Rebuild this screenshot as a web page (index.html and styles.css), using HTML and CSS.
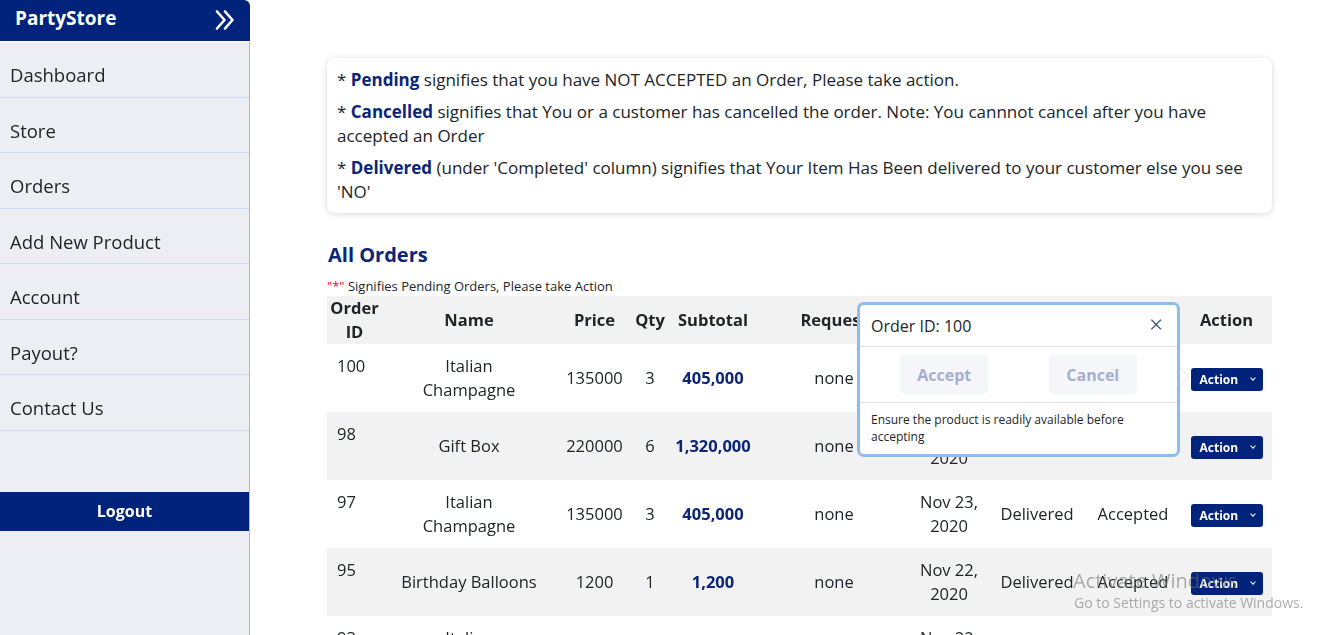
FILE: index.html
```html
<!DOCTYPE html>
<html lang="en">
<head>
<meta charset="utf-8">
<title>PartyStore - Orders</title>
<link rel="stylesheet" href="styles.css">
</head>
<body>
<aside class="sidebar">
  <div class="brand">
    <span class="brand-name">PartyStore</span>
    <svg class="brand-icon" width="22" height="22" viewBox="0 0 22 22" fill="none" stroke="#fff" stroke-width="2.6" stroke-linecap="round" stroke-linejoin="round">
      <polyline points="3,2.5 10.5,11 3,19.5"/>
      <polyline points="11,2.5 18.5,11 11,19.5"/>
    </svg>
  </div>
  <nav class="nav">
    <a href="#">Dashboard</a>
    <a href="#">Store</a>
    <a href="#">Orders</a>
    <a href="#">Add New Product</a>
    <a href="#">Account</a>
    <a href="#">Payout?</a>
    <a href="#">Contact Us</a>
  </nav>
  <button class="logout">Logout</button>
</aside>

<main class="main">
  <section class="info">
    <p>* <b>Pending</b> signifies that you have NOT ACCEPTED an Order, Please take action.</p>
    <p>* <b>Cancelled</b> signifies that You or a customer has cancelled the order. Note: You cannnot cancel after you have accepted an Order</p>
    <p>* <b>Delivered</b> (under 'Completed' column) signifies that Your Item Has Been delivered to your customer else you see 'NO'</p>
  </section>

  <h2 class="title">All Orders</h2>
  <p class="note"><span class="red">"*"</span> Signifies Pending Orders, Please take Action</p>

  <div class="table-wrap">
    <table class="orders">
      <colgroup>
        <col class="c-id"><col class="c-name"><col class="c-price"><col class="c-qty"><col class="c-sub">
        <col class="c-req"><col class="c-date"><col class="c-comp"><col class="c-status"><col class="c-act">
      </colgroup>
      <thead>
        <tr>
          <th>Order ID</th><th>Name</th><th>Price</th><th>Qty</th><th>Subtotal</th>
          <th>Request</th><th>Order Date</th><th>Completed</th><th>Status</th><th>Action</th>
        </tr>
      </thead>
      <tbody>
        <tr>
          <td class="id">100</td><td class="name">Italian Champagne</td><td>135000</td><td>3</td><td class="sub">405,000</td>
          <td>none</td><td>Nov 24, 2020</td><td>NO</td><td>Pending</td>
          <td><button class="act">Action <span class="caret"></span></button></td>
        </tr>
        <tr>
          <td class="id">98</td><td class="name">Gift Box</td><td>220000</td><td>6</td><td class="sub">1,320,000</td>
          <td>none</td><td>Nov 23, 2020</td><td>NO</td><td>Accepted</td>
          <td><button class="act">Action <span class="caret"></span></button></td>
        </tr>
        <tr>
          <td class="id">97</td><td class="name">Italian Champagne</td><td>135000</td><td>3</td><td class="sub">405,000</td>
          <td>none</td><td>Nov 23, 2020</td><td>Delivered</td><td>Accepted</td>
          <td><button class="act">Action <span class="caret"></span></button></td>
        </tr>
        <tr>
          <td class="id">95</td><td class="name">Birthday Balloons</td><td>1200</td><td>1</td><td class="sub">1,200</td>
          <td>none</td><td>Nov 22, 2020</td><td>Delivered</td><td>Accepted</td>
          <td><button class="act">Action <span class="caret"></span></button></td>
        </tr>
        <tr>
          <td class="id">93</td><td class="name">Italian Champagne</td><td>135000</td><td>2</td><td class="sub">270,000</td>
          <td>none</td><td>Nov 22, 2020</td><td>Delivered</td><td>Accepted</td>
          <td><button class="act">Action <span class="caret"></span></button></td>
        </tr>
      </tbody>
    </table>

    <div class="popover">
      <div class="pop-head">
        <span>Order ID: 100</span>
        <span class="close">&times;</span>
      </div>
      <div class="pop-body">
        <button class="pop-btn">Accept</button>
        <button class="pop-btn">Cancel</button>
      </div>
      <div class="pop-foot">Ensure the product is readily available before accepting</div>
      <span class="pop-arrow"></span>
    </div>
  </div>
</main>

<div class="watermark">
  <div class="wm-title">Activate Windows</div>
  <div class="wm-sub">Go to Settings to activate Windows.</div>
</div>
</body>
</html>
```

FILE: styles.css
```css
* { box-sizing: border-box; }

html, body { height: 100%; }

body {
  margin: 0;
  font-family: "Open Sans", "Liberation Sans", sans-serif;
  color: #212529;
  background: #fff;
  display: flex;
  align-items: flex-start;
}

/* Sidebar */
.sidebar {
  flex: none;
  width: 250px;
  height: 100vh;
  position: sticky;
  top: 0;
  background: #edeef4;
  border-right: 1px solid #b8b8bc;
  border-top-right-radius: 7px;
  display: flex;
  flex-direction: column;
}

.brand {
  height: 42px;
  background: #02237b;
  border-bottom: 1px solid #fff;
  border-top-right-radius: 6px;
  display: flex;
  align-items: center;
  justify-content: space-between;
  padding: 0 14px 6px 15px;
  color: #fff;
  font-weight: 700;
  font-size: 19px;
  margin-right: -1px;
}

.brand-icon { margin-top: 4px; }

.nav { display: flex; flex-direction: column; }

.nav a {
  display: block;
  padding: 20px 10px 9px;
  line-height: 25.5px;
  font-size: 18.5px;
  color: #212529;
  text-decoration: none;
  border-bottom: 1px solid #c9d8f4;
}

.logout {
  margin-top: 61px;
  height: 39px;
  border: none;
  background: #02237b;
  color: #fff;
  font-family: inherit;
  font-weight: 700;
  font-size: 16px;
  padding: 0;
}

/* Main */
.main {
  flex: 1;
  padding: 58px 65px 0 77px;
  min-width: 0;
}

.info {
  background: #fff;
  border-radius: 8px;
  box-shadow: 0 1px 6px rgba(0, 0, 0, 0.16);
  padding: 10px 10px 9px;
  font-size: 17px;
  line-height: 24px;
}

.info p { margin: 0 0 8px; }
.info p:last-child { margin: 0; }
.info b { color: #0b2579; font-weight: 700; }

.title {
  margin: 28px 0 0 1px;
  font-size: 20px;
  line-height: 28px;
  color: #0b2579;
  font-weight: 700;
}

.note {
  margin: 8px 0 0;
  font-size: 13px;
  line-height: 18px;
}

.red { color: #e8112d; }

/* Table */
.table-wrap { position: relative; margin-top: 1px; }

.orders {
  width: 945px;
  table-layout: fixed;
  border-collapse: collapse;
  font-size: 16.5px;
  line-height: 24px;
}

.c-id { width: 55px; }
.c-name { width: 174px; }
.c-price { width: 77px; }
.c-qty { width: 34px; }
.c-sub { width: 92px; }
.c-req { width: 150px; }
.c-date { width: 80px; }
.c-comp { width: 96px; }
.c-status { width: 96px; }
.c-act { width: 91px; }

.orders th {
  height: 48px;
  padding: 0 2px;
  font-weight: 700;
  text-align: center;
  vertical-align: middle;
  background: #f2f2f2;
}

.orders td {
  height: 68px;
  padding: 10px 2px;
  text-align: center;
  vertical-align: middle;
}

.orders tbody tr:nth-child(even) td { background: #f2f2f2; }

.orders td.id { text-align: left; vertical-align: top; padding-left: 10px; }
.orders td.name { padding: 10px 16px; }
.orders td.sub { color: #0b2579; font-weight: 700; }

.act {
  width: 72px;
  height: 23px;
  border: none;
  border-radius: 3px;
  background: #02237b;
  color: #fff;
  font-family: inherit;
  font-weight: 700;
  font-size: 12px;
  display: inline-flex;
  align-items: center;
  justify-content: space-between;
  padding: 0 8px 0 9px;
}

.caret {
  width: 4px;
  height: 4px;
  border-right: 1.2px solid #fff;
  border-bottom: 1.2px solid #fff;
  transform: rotate(45deg);
  margin-top: -2px;
}

/* Popover */
.popover {
  position: absolute;
  left: 530px;
  top: 6px;
  width: 323px;
  background: #fff;
  border: 3px solid #8fbce8;
  border-radius: 7px;
}

.pop-head {
  height: 42px;
  display: flex;
  align-items: center;
  justify-content: space-between;
  padding: 0 14px 0 11px;
  font-size: 16px;
  border-bottom: 1px solid #dfe3ea;
}

.close { font-size: 24px; font-weight: 300; line-height: 1; color: #333; margin-top: -3px; }

.pop-body {
  height: 56px;
  display: flex;
  align-items: center;
  justify-content: space-around;
  padding: 0 10px;
  border-bottom: 1px solid #dfe3ea;
}

.pop-btn {
  width: 88px;
  height: 39px;
  border: none;
  border-radius: 4px;
  background: #f5f6fa;
  color: #a7aed1;
  font-family: inherit;
  font-weight: 700;
  font-size: 16px;
}

.pop-foot {
  padding: 8px 11px 9px;
  font-size: 12px;
  line-height: 17px;
}

.pop-arrow {
  position: absolute;
  right: -10px;
  top: 65px;
  width: 14px;
  height: 14px;
  background: #fff;
  border-top: 1px solid #dfe3ea;
  border-right: 1px solid #dfe3ea;
  transform: rotate(45deg);
  clip-path: polygon(0 0, 100% 0, 100% 100%);
}

/* Watermark */
.watermark {
  position: fixed;
  left: 1073px;
  top: 569px;
  color: rgba(110, 110, 110, 0.55);
  font-family: "Open Sans", "Liberation Sans", sans-serif;
  pointer-events: none;
}

.wm-title { font-size: 20px; line-height: 24px; }
.wm-sub { font-size: 14px; line-height: 20px; margin-left: 1px; }
```
